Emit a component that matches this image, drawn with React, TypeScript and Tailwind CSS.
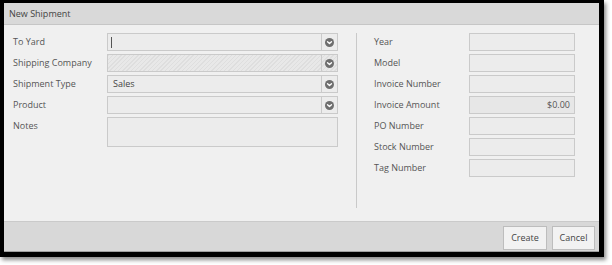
import React from "react";

const font = "font-['Open_Sans',sans-serif]";

function Chevron() {
  return (
    <svg width="9" height="9" viewBox="0 0 10 10">
      <circle cx="5" cy="5" r="5" fill="#6e6e6e" />
      <path d="M2.8 4.1 L5 6.2 L7.2 4.1" stroke="#fff" strokeWidth="1.5" fill="none" strokeLinecap="round" strokeLinejoin="round" />
    </svg>
  );
}

function Select({ value, disabled, cursor }: { value?: string; disabled?: boolean; cursor?: boolean }) {
  return (
    <div
      className={
        "flex h-[18px] w-[231px] border border-[#cacaca] " +
        (disabled
          ? "bg-[image:repeating-linear-gradient(135deg,#dedede_0px,#dedede_1px,#e8e8e8_1px,#e8e8e8_3px)]"
          : "bg-[#ececec]")
      }
    >
      <div className="flex flex-1 items-center pl-[5px] text-[9px] text-[#444]">
        {cursor && <div className="ml-[-2px] h-[11px] w-px bg-[#555]" />}
        {value}
      </div>
      <div className="flex w-[16px] items-center justify-center border-l border-[#cacaca]">
        <Chevron />
      </div>
    </div>
  );
}

function LeftRow({ label, children }: { label: string; children: React.ReactNode }) {
  return (
    <div className="flex items-start">
      <div className="w-[94px] pt-[3px] text-[9px] leading-[12px] text-[#555]">{label}</div>
      {children}
    </div>
  );
}

function RightRow({ label, value, dark }: { label: string; value?: string; dark?: boolean }) {
  return (
    <div className="flex items-center">
      <div className="w-[95px] text-[9px] text-[#555]">{label}</div>
      <div
        className={
          "flex h-[18px] w-[106px] items-center justify-end border border-[#cacaca] pr-[4px] text-[9px] text-[#555] " +
          (dark ? "bg-[#e7e7e7]" : "bg-[#ececec]")
        }
      >
        {value}
      </div>
    </div>
  );
}

export default function App() {
  return (
    <div className={"h-[265px] w-[612px] bg-white " + font}>
      <div className="w-[604px] bg-black pb-[5px] pl-[4px] pr-[5px] pt-[3px] shadow-[2px_3px_4px_rgba(0,0,0,0.45)]">
        <div className="flex flex-col bg-[#f0f0f0]">
          <div className="flex h-[22px] items-center border-b border-[#c6c6c6] bg-[#d9d9d9] pl-[5px] text-[9px] text-[#444]">
            New Shipment
          </div>
          <div className="flex h-[196px] pt-[8px]">
            <div className="flex flex-col gap-[3px] pl-[9px]">
              <LeftRow label="To Yard">
                <Select cursor />
              </LeftRow>
              <LeftRow label="Shipping Company">
                <Select disabled />
              </LeftRow>
              <LeftRow label="Shipment Type">
                <Select value="Sales" />
              </LeftRow>
              <LeftRow label="Product">
                <Select />
              </LeftRow>
              <LeftRow label="Notes">
                <div className="h-[30px] w-[231px] border border-[#cacaca] bg-[#ececec]" />
              </LeftRow>
            </div>
            <div className="ml-[18px] h-[175px] w-px bg-[#c9c9c9]" />
            <div className="ml-[17px] flex flex-col gap-[3px]">
              <RightRow label="Year" />
              <RightRow label="Model" />
              <RightRow label="Invoice Number" />
              <RightRow label="Invoice Amount" value="$0.00" dark />
              <RightRow label="PO Number" />
              <RightRow label="Stock Number" />
              <RightRow label="Tag Number" />
            </div>
          </div>
          <div className="flex h-[31px] items-start justify-end gap-[5px] border-b border-t border-b-[#a0a0a0] border-t-[#cacaca] bg-[#d8d8d8] pr-[4px] pt-[4px]">
            <button className="h-[24px] w-[44px] border border-[#bdbdbd] bg-[#f2f2f2] text-[9px] text-[#444]">Create</button>
            <button className="h-[24px] w-[43px] border border-[#bdbdbd] bg-[#f2f2f2] text-[9px] text-[#444]">Cancel</button>
          </div>
        </div>
      </div>
    </div>
  );
}
